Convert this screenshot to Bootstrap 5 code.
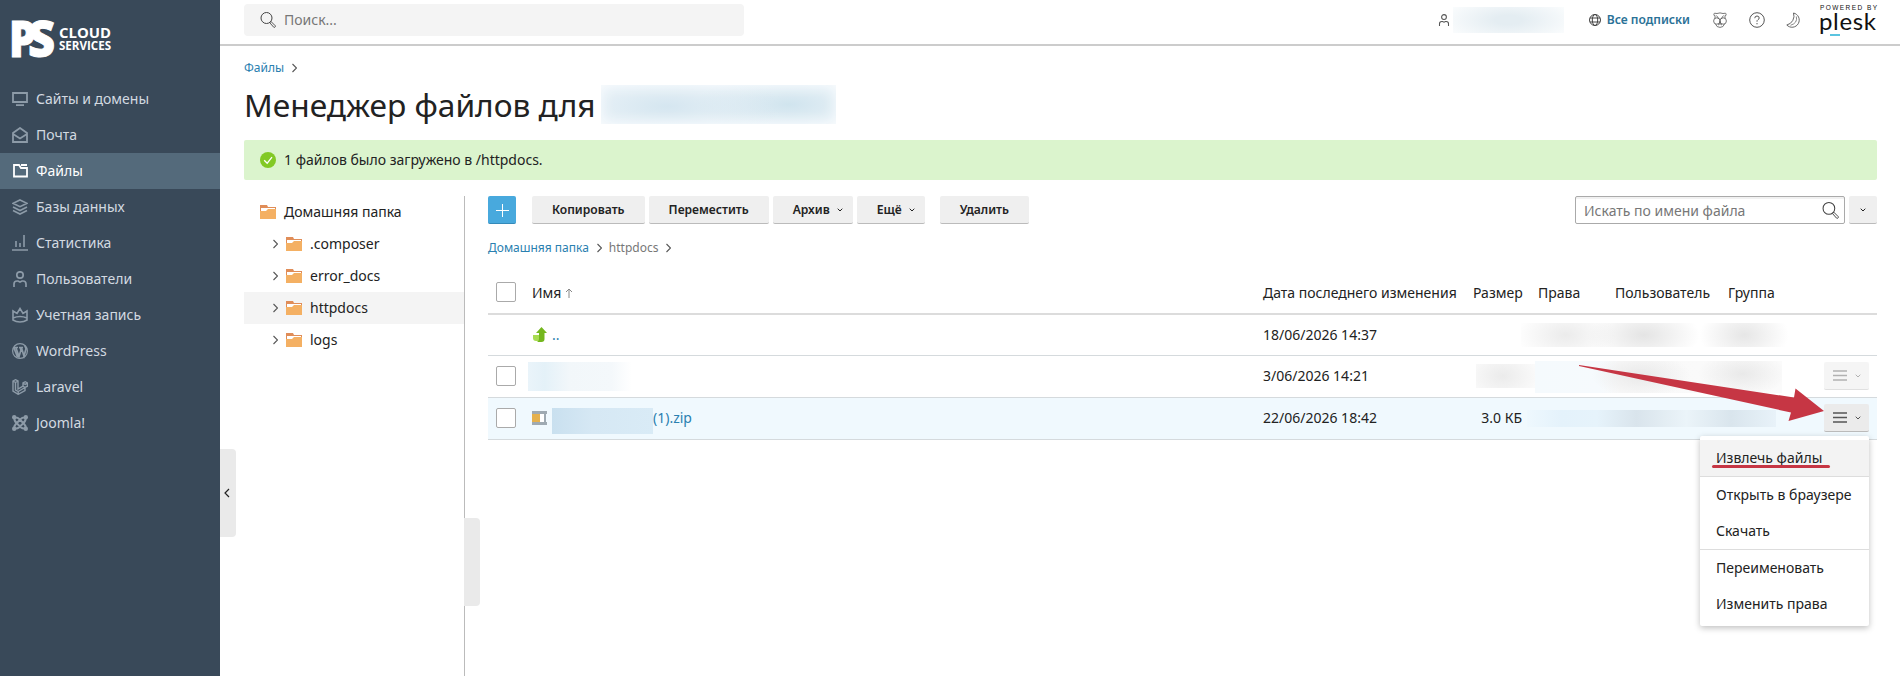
<!DOCTYPE html>
<html lang="ru">

<head>
    <meta charset="UTF-8">
    <meta name="viewport" content="width=device-width, initial-scale=1.0">
    <title>Менеджер файлов</title>
    <!-- Bootstrap CSS -->
    <link href="https://cdn.jsdelivr.net/npm/bootstrap@5.3.2/dist/css/bootstrap.min.css" rel="stylesheet">
    <style>
        body {
            font-family: "Noto Sans", "Open Sans", sans-serif;
            font-size: 14px;
            line-height: 20px;
            color: #222;
            height: 676px;
            overflow: hidden;
        }

        a {
            color: #2a80b0;
            text-decoration: none;
        }

        svg {
            display: block;
            flex: none;
        }

        .line-icon {
            fill: none;
            stroke: currentColor;
        }

        /* Sidebar */
        .sidebar {
            width: 220px;
            background: #394959;
        }

        .brand {
            height: 81px;
        }

        .side-menu .nav-link {
            height: 36px;
            padding: 0 12px 1px;
            gap: 8px;
            font-size: 14px;
            color: #d3dae1;
        }

        .side-menu .nav-link svg {
            color: #8d9ba8;
        }

        .side-menu .nav-link.active {
            background: #546a7b;
            color: #fff;
        }

        .side-menu .nav-link.active svg {
            color: #fff;
        }

        .handle {
            left: 100%;
            width: 16px;
            height: 88px;
            background: #eaeaea;
            border-radius: 0 4px 4px 0;
        }

        .handle-side {
            top: 449px;
        }

        .handle-tree {
            top: 322px;
        }

        /* Top bar */
        .topbar {
            height: 46px;
            padding: 4px 22px 0 24px;
            border-bottom: 2px solid #ccc;
        }

        .global-search {
            width: 500px;
            height: 32px;
            padding: 0 16px;
            gap: 8px;
            background: #f4f4f4;
            border-radius: 4px;
            color: #777;
        }

        .topbar-right {
            height: 32px;
            color: #555;
        }

        .subscriptions {
            gap: 6px;
            margin-left: 25px;
            margin-right: 23px;
            font-weight: 600;
            font-size: 12.1px;
            color: #2b7297;
        }

        .panda {
            margin-right: 22px;
        }

        .moon {
            margin-left: 21px;
        }

        .page-body {
            padding: 13px 23px 0 24px;
        }

        .crumbs {
            font-size: 12px;
            line-height: 18px;
            gap: 7px;
            color: #777;
        }

        .crumbs-path {
            margin: 15px 0 13px;
        }

        .title-line {
            gap: 5px;
            margin: 7px 0 16px;
        }

        h1 {
            font-size: 31.7px;
            line-height: 39px;
            font-weight: 400;
            color: #222;
        }

        .notice {
            height: 40px;
            padding: 0 16px;
            gap: 8px;
            background: #dbf4cd;
            border-radius: 2px;
        }

        /* Folder tree */
        .tree {
            width: 221px;
            border-right: 1px solid #bbb;
        }

        .tree-row {
            height: 32px;
            gap: 8px;
            padding-left: 28px;
        }

        .tree-row.root {
            padding-left: 16px;
        }

        .tree-row.current {
            background: #f4f4f4;
        }

        /* Toolbar */
        .file-pane {
            padding-left: 23px;
        }

        .tool {
            height: 28px;
            padding: 0 20px;
            border: 0;
            border-bottom: 1px solid #bbb;
            border-radius: 2px;
            background: #efefef;
            font-size: 12.1px;
            font-weight: 600;
            line-height: 26px;
            color: #222;
        }

        .tool-menu {
            display: flex;
            align-items: center;
            gap: 7px;
            padding-right: 10px;
        }

        .tool-last {
            margin-left: 11px;
        }

        .tool-add {
            width: 28px;
            padding: 0 6px;
            background: #48a9dd;
            border-bottom-color: #348ab9;
        }

        .tool-drop {
            width: 28px;
            padding: 0 11px;
        }

        .file-search {
            width: 270px;
            height: 28px;
            padding: 1px 5px 0 8px;
            border: 1px solid #aaa;
            border-radius: 2px;
            box-shadow: inset 0 2px 0 #f1f1f1;
            color: #777;
        }

        /* File list */
        .files {
            table-layout: fixed;
            width: 1389px;
            color: #222;
        }

        .files th {
            font-weight: 400;
        }

        .files th,
        .files td {
            padding: 0;
            vertical-align: middle;
            border-bottom: 1px solid #d5dadd;
        }

        .files thead th {
            height: 44px;
            padding-top: 2px;
            border-bottom: 2px solid #dcdcdc;
        }

        .files tbody td {
            height: 42px;
        }

        .files tbody tr:first-child td {
            height: 41px;
        }

        .files .chosen td {
            background: #f0f9fe;
        }

        .files .form-check-input {
            display: block;
            width: 20px;
            height: 20px;
            margin: 0 0 0 8px;
            border: 1px solid #aaa;
            border-radius: 2px;
        }

        .files thead .form-check-input {
            margin-bottom: 2px;
        }

        .row-btn {
            display: flex;
            align-items: center;
            width: 45px;
            height: 28px;
            padding: 0 9px;
            gap: 8px;
            border-bottom: 1px solid #bbb;
            border-radius: 2px;
            background: #ebebeb;
            color: #555;
        }

        .row-btn.faded {
            opacity: .45;
        }

        /* Hidden values */
        .veil {
            display: block;
        }

        .veil-user {
            width: 111px;
            height: 26px;
            margin-left: 3px;
            background: radial-gradient(ellipse 60% 90% at center, #e4edf2 20%, #fafcfd);
        }

        .veil-title {
            width: 235px;
            height: 39px;
            margin-top: 1px;
            background: radial-gradient(ellipse 50% 90% at 28% 55%, #d5e6f0, transparent),
                radial-gradient(ellipse 40% 80% at 80% 50%, #d0e4ee, transparent), #f0f6fa;
            box-shadow: inset 0 0 14px #fafcfe;
        }

        .veil-file {
            width: 104px;
            height: 29px;
            margin-left: -4px;
            background: linear-gradient(90deg, #eaf4fa, #e4f1f8 16%, #f2f7fa 40%, #f4f8fb 80%, #fff);
        }

        .veil-zip {
            width: 101px;
            height: 26px;
            margin-top: 5px;
            background: linear-gradient(90deg, #c9e0ef, #d6e8f4 40%, #d9ebf6);
        }

        .veil-meta {
            width: 279px;
            height: 24px;
            margin-left: -17px;
            background: radial-gradient(ellipse 18% 120% at 16% 50%, #ebebeb, transparent),
                radial-gradient(ellipse 20% 120% at 44% 50%, #e4e4e4, transparent),
                radial-gradient(ellipse 16% 120% at 80% 50%, #e6e6e6, transparent);
        }

        .veil-size {
            width: 59px;
            height: 24px;
            margin-left: 3px;
            background: radial-gradient(ellipse 60% 100% at 45% 50%, #ebebeb, #fafafa);
        }

        .veil-meta2 {
            width: 247px;
            height: 32px;
            margin: 2px 0 0 -3px;
            background: radial-gradient(ellipse 20% 70% at 43% 45%, #e9e9e9, transparent),
                radial-gradient(ellipse 18% 70% at 84% 40%, #e9e9e9, transparent),
                linear-gradient(90deg, #f5fafd, #f6fafd 26%, #f9f9f9 34%, #fbfbfb);
        }

        .veil-meta3 {
            width: 249px;
            height: 17px;
            margin-left: -11px;
            background: linear-gradient(90deg, #eef8fe, #e4f2fb 14%, #e6f3fb 28%, #d9e4ec 44%, #ebf4f9 64%, #d9e5ed 82%, #e8f2f9);
        }

        /* Context menu */
        .ctx {
            display: block;
            top: 436px;
            right: 31px;
            left: auto;
            width: 169px;
            min-width: 0;
            padding: 4px 0;
            border: 0;
            border-radius: 2px;
            box-shadow: 0 2px 6px rgba(0, 0, 0, .25);
            font-size: 14px;
        }

        .ctx .dropdown-item {
            height: 36px;
            padding: 8px 16px;
            line-height: 20px;
            color: #222;
        }

        .ctx .dropdown-item.hovered {
            background: #f3f3f3;
        }

        .ctx .dropdown-divider {
            margin: 0;
            border-color: #ddd;
        }

        .marker {
            left: 12px;
            bottom: 8px;
            width: 118px;
            height: 3px;
            border-radius: 2px;
            background: #c63644;
        }

        .pointer {
            top: 360px;
            right: 74px;
            z-index: 1001;
        }
    </style>
</head>

<body class="d-flex position-relative">
    <!-- Shared shapes -->
    <svg width="0" height="0" class="position-absolute">
        <symbol id="folder" viewBox="0 0 16 16">
            <path d="M0 1h7l1 2h8v5H0z" fill="#e08d58" />
            <path d="M1 4h14v5H1z" fill="#fff" />
            <path d="M0 7h6l2-2h8v10H0z" fill="#f4b063" />
        </symbol>
        <symbol id="right" viewBox="0 0 6 10">
            <path d="M1.500 1l4 4-4 4" fill="none" stroke="#555" stroke-width="1.1" />
        </symbol>
        <symbol id="down" viewBox="0 0 6 4">
            <path d="M.7.7L3 3 5.300.7" fill="none" stroke="currentColor" />
        </symbol>
        <symbol id="lens" viewBox="0 0 16 16">
            <g fill="none" stroke="currentColor">
                <circle cx="6.500" cy="6" r="5.500" />
                <path d="M10 10.500l1-1 4.300 4.300q.3 1-.4 1.400t-1.200 0L10 11z" stroke-width=".9" />
            </g>
        </symbol>
        <symbol id="bars" viewBox="0 0 14 11">
            <path d="M0 1h14M0 5.500h14M0 10h14" stroke="currentColor" stroke-width="1.700" />
        </symbol>
        <symbol id="person" viewBox="0 0 16 16">
            <g fill="none" stroke="currentColor">
                <circle cx="8" cy="4" r="3.200" />
                <path d="M2 16v-3q0-3 3-3h1l2 1 2-1h1q3 0 3 3v3" />
            </g>
        </symbol>
    </svg>

    <!-- Sidebar -->
    <aside class="sidebar position-relative flex-shrink-0">
        <div class="brand">
            <svg width="120" height="81" fill="#fff" font-family="Open Sans, sans-serif">
                <text x="9" y="57" font-size="50" font-weight="800" textLength="27" lengthAdjust="spacingAndGlyphs" stroke="#fff">P</text>
                <text x="28" y="56.500" font-size="49" font-weight="800" textLength="27" lengthAdjust="spacingAndGlyphs" stroke="#fff">S</text>
                <text x="59" y="38" font-size="14.500" font-weight="700" textLength="52" lengthAdjust="spacingAndGlyphs">CLOUD</text>
                <text x="59" y="49.500" font-size="11.500" font-weight="700" textLength="52" lengthAdjust="spacingAndGlyphs">SERVICES</text>
            </svg>
        </div>
        <nav class="side-menu nav flex-column flex-nowrap">
            <a class="nav-link d-flex align-items-center" href="#">
                <svg class="line-icon" width="16" height="16" stroke-width="1.8"><path d="M1 2h14v9H1zM4 14.100h8" /></svg>
                Сайты и домены
            </a>
            <a class="nav-link d-flex align-items-center" href="#">
                <svg class="line-icon" width="16" height="16" stroke-width="1.8"><path d="M1 15V6l7-5 7 5v9zM1 7l7 4.500L15 7" /></svg>
                Почта
            </a>
            <a class="nav-link active d-flex align-items-center" href="#">
                <svg class="line-icon" width="16" height="16" stroke-width="1.8"><path d="M2 2h5l2 3h6v8.500H2zM9 2h6" /></svg>
                Файлы
            </a>
            <a class="nav-link d-flex align-items-center" href="#">
                <svg class="line-icon" width="16" height="16" stroke-width="1.6"><path d="M8 1l7 3.300-7 3.300-7-3.300zM1 8l7 3.500L15 8M1 11.500L8 15l7-3.500" /></svg>
                Базы данных
            </a>
            <a class="nav-link d-flex align-items-center" href="#">
                <svg class="line-icon" width="16" height="16" stroke-width="1.6"><path d="M0 15h16M4 6v6M8 8v4M12 0v12" /></svg>
                Статистика
            </a>
            <a class="nav-link d-flex align-items-center" href="#">
                <svg width="16" height="16" stroke-width="1.7"><use href="#person" /></svg>
                Пользователи
            </a>
            <a class="nav-link d-flex align-items-center" href="#">
                <svg class="line-icon" width="16" height="16" stroke-width="1.6"><path d="M1 13V4l4 2.500 3-5 3 5L15 4v9q-3 2-7 2t-7-2zM1 11q7-3 14 0" /></svg>
                Учетная запись
            </a>
            <a class="nav-link d-flex align-items-center" href="#">
                <svg class="line-icon" width="16" height="16"><circle cx="8" cy="8" r="7.400" stroke-width="1.200" /><path d="M2 5l3.500 9M2 4.500h4M4 5l3 8.500L9 7 8 4.500M7 4.500h4M9.500 5l2.500 8L14 6q0-2-1.500-3" stroke-width="1.700" /></svg>
                WordPress
            </a>
            <a class="nav-link d-flex align-items-center" href="#">
                <svg class="line-icon" width="16" height="16" stroke-width="1.400"><path d="M1 2l2.500-1.300L6 2v8l5-3V4l2.300-1.300L15.500 4v3.200L13 8.500v3L6.200 15.300 1 12zM1 2l2.500 1.500L6 2M3.500 3.500V11L6.200 12.500 13 8.500M11 4l2.200 1.400L15.500 4M11 7l2 1.500M6.200 12.500v2.800" /></svg>
                Laravel
            </a>
            <a class="nav-link d-flex align-items-center" href="#">
                <svg class="line-icon" width="16" height="16" stroke-width="2"><path d="M2.500 3q-.5 3 2 5l4.500 4.500q2 1.500 4.500.8M13.500 3q.5 3-2 5L7 12.500q-2 1.500-4.500.8M2.500 2.700q3-.5 5 1.500L12 8.700q2 2 1.500 4.500M13.500 2.700q-3-.5-5 1.500L4 8.700q-2 2-1.500 4.500" /><g fill="currentColor" stroke="none"><circle cx="2.200" cy="2.200" r="2.200" /><circle cx="13.800" cy="2.200" r="2.200" /><circle cx="2.200" cy="13.800" r="2.200" /><circle cx="13.800" cy="13.800" r="2.200" /></g></svg>
                Joomla!
            </a>
        </nav>
        <div class="handle handle-side position-absolute d-flex align-items-center ps-1">
            <svg class="line-icon" width="6" height="10" stroke-width="1.2"><path d="M5 1L1 5l4 4" /></svg>
        </div>
    </aside>

    <div class="flex-grow-1 d-flex flex-column">
        <!-- Top bar -->
        <header class="topbar d-flex justify-content-between align-items-start">
            <div class="global-search d-flex align-items-center">
                <svg width="16" height="16" color="#444"><use href="#lens" /></svg>
                Поиск...
            </div>
            <div class="topbar-right d-flex align-items-center">
                <svg width="12" height="12"><use href="#person" stroke-width="1.4" /></svg>
                <span class="veil veil-user"></span>
                <a class="subscriptions d-flex align-items-center" href="#">
                    <svg class="line-icon" width="12" height="12" color="#444"><circle cx="6" cy="6" r="5.500" /><ellipse cx="6" cy="6" rx="2.700" ry="5.500" /><path d="M1 4h10M1 8h10" /></svg>
                    Все подписки
                </a>
                <svg class="line-icon panda" width="14" height="16" stroke-width=".8">
                    <path d="M1.500 4Q0 1.500 1.500 1.200L4 1.500q3-1.200 6 0l2.500-.3Q14 1.500 12.500 4M2 3.500v3M12 3.500v3M3.500 3.500L6 7M10.500 3.500L8 7" />
                    <circle cx="3.800" cy="9" r="3.200" />
                    <circle cx="10.200" cy="9" r="3.200" />
                    <path d="M2.500 12q1 3.400 4.500 3.400t4.500-3.400M5 13q2-2.500 4 0M7 9v3" />
                </svg>
                <svg class="line-icon" width="16" height="16"><circle cx="8" cy="8" r="7.300" /><path d="M5.800 6.200q0-2.200 2.200-2.200t2.200 2q0 1-1.200 1.700T8 9.700M8 11v1.300" /></svg>
                <svg class="line-icon moon" width="14" height="16" stroke-width=".9">
                    <path d="M7.500 1A7.200 7.200 0 1 1 .8 13 9.300 9.300 0 0 0 7.500 1z" />
                    <path d="M10.300 4.500Q12 11 4.500 13.300" stroke-width=".7" />
                </svg>
                <svg class="ms-3" width="62" height="36" fill="#111" font-family="Lato, sans-serif">
                    <text x="4" y="8" font-size="6.500" font-family="Liberation Sans" textLength="57">POWERED BY</text>
                    <text x="3" y="28" font-size="24" textLength="57">plesk</text>
                    <path d="M14 32h10v2H14z" fill="#5bc4e0" />
                </svg>
            </div>
        </header>

        <main class="page-body flex-grow-1 d-flex flex-column">
            <div class="crumbs d-flex align-items-center">
                <a href="#">Файлы</a>
                <svg width="6" height="10"><use href="#right" /></svg>
            </div>
            <div class="title-line d-flex align-items-center">
                <h1 class="m-0">Менеджер файлов для</h1>
                <span class="veil veil-title"></span>
            </div>
            <div class="notice d-flex align-items-center">
                <svg width="16" height="16"><circle cx="8" cy="8" r="8" fill="#82c925" /><path d="M4.200 8.200l3 3 4.800-6" fill="none" stroke="#fff" stroke-width="1.300" /></svg>
                1 файлов было загружено в /httpdocs.
            </div>

            <div class="d-flex flex-grow-1 mt-3">
                <!-- Folder tree -->
                <div class="tree position-relative flex-shrink-0">
                    <div class="tree-row root d-flex align-items-center">
                        <svg width="16" height="16"><use href="#folder" /></svg>
                        Домашняя папка
                    </div>
                    <div id="tree-rows"></div>
                    <div class="handle handle-tree position-absolute"></div>
                </div>

                <div class="file-pane flex-grow-1">
                    <!-- Toolbar -->
                    <div class="d-flex justify-content-between">
                        <div class="d-flex gap-1">
                            <button class="tool tool-add me-2">
                                <svg class="line-icon" width="16" height="16" color="#fff"><path d="M8.500 2v13M2 8.500h13" /></svg>
                            </button>
                            <button class="tool ms-1">Копировать</button>
                            <button class="tool">Переместить</button>
                            <button class="tool tool-menu">Архив <svg width="6" height="4"><use href="#down" /></svg></button>
                            <button class="tool tool-menu">Ещё <svg width="6" height="4"><use href="#down" /></svg></button>
                            <button class="tool tool-last">Удалить</button>
                        </div>
                        <div class="d-flex gap-1">
                            <div class="file-search d-flex align-items-center justify-content-between">
                                Искать по имени файла
                                <svg width="17" height="17" color="#444"><use href="#lens" /></svg>
                            </div>
                            <button class="tool tool-drop"><svg width="6" height="4"><use href="#down" /></svg></button>
                        </div>
                    </div>

                    <div class="crumbs crumbs-path d-flex align-items-center">
                        <a href="#">Домашняя папка</a>
                        <svg width="6" height="10"><use href="#right" /></svg>
                        <span>httpdocs</span>
                        <svg width="6" height="10"><use href="#right" /></svg>
                    </div>

                    <!-- File list -->
                    <table class="files">
                        <colgroup>
                            <col width="44">
                            <col width="731">
                            <col width="210">
                            <col width="65">
                            <col width="77">
                            <col width="113">
                            <col width="96">
                            <col width="53">
                        </colgroup>
                        <thead>
                            <tr>
                                <th><input class="form-check-input" type="checkbox"></th>
                                <th>
                                    <span class="d-flex align-items-center gap-1">Имя
                                        <svg class="line-icon" width="8" height="10" color="#888"><path d="M4 10V1M1 4l3-3 3 3" /></svg>
                                    </span>
                                </th>
                                <th>Дата последнего изменения</th>
                                <th>Размер</th>
                                <th>Права</th>
                                <th>Пользователь</th>
                                <th>Группа</th>
                                <th></th>
                            </tr>
                        </thead>
                        <tbody>
                            <tr>
                                <td></td>
                                <td>
                                    <a class="d-flex align-items-center gap-1" href="#">
                                        <svg width="16" height="16"><path d="M1 8h6v6H4q-3 0-3-3z" fill="#a8dc52" /><path d="M9.500 0L15 6h-2.500v6q0 3-3 3H5q2-1 2-3V6H4z" fill="#74b71e" /></svg>
                                        ..
                                    </a>
                                </td>
                                <td>18/06/2026 14:37</td>
                                <td></td>
                                <td colspan="3"><span class="veil veil-meta"></span></td>
                                <td></td>
                            </tr>
                            <tr>
                                <td><input class="form-check-input" type="checkbox"></td>
                                <td><span class="veil veil-file"></span></td>
                                <td>3/06/2026 14:21</td>
                                <td><span class="veil veil-size"></span></td>
                                <td colspan="3"><span class="veil veil-meta2"></span></td>
                                <td>
                                    <div class="row-btn faded">
                                        <svg width="14" height="11"><use href="#bars" /></svg>
                                        <svg width="6" height="4"><use href="#down" /></svg>
                                    </div>
                                </td>
                            </tr>
                            <tr class="chosen">
                                <td><input class="form-check-input" type="checkbox"></td>
                                <td>
                                    <a class="d-flex align-items-center" href="#">
                                        <svg class="me-1" width="16" height="16"><path d="M0 1h15v3h-1v8h1v3H0z" fill="#9faab2" /><path d="M8 4h4v8H8z" fill="#fff" /><path d="M0 4h8v8H0z" fill="#e5b14e" /></svg>
                                        <span class="veil veil-zip"></span>(1).zip
                                    </a>
                                </td>
                                <td>22/06/2026 18:42</td>
                                <td><div class="text-end pe-3">3.0 КБ</div></td>
                                <td colspan="3"><span class="veil veil-meta3"></span></td>
                                <td>
                                    <div class="row-btn">
                                        <svg width="14" height="11"><use href="#bars" /></svg>
                                        <svg width="6" height="4"><use href="#down" /></svg>
                                    </div>
                                </td>
                            </tr>
                        </tbody>
                    </table>
                </div>
            </div>
        </main>
    </div>

    <!-- Row menu -->
    <ul class="ctx dropdown-menu position-absolute">
        <li class="position-relative">
            <a class="dropdown-item hovered" href="#">Извлечь файлы</a>
            <span class="marker position-absolute"></span>
        </li>
        <li><hr class="dropdown-divider"></li>
        <li><a class="dropdown-item" href="#">Открыть в браузере</a></li>
        <li><a class="dropdown-item" href="#">Скачать</a></li>
        <li><hr class="dropdown-divider"></li>
        <li><a class="dropdown-item" href="#">Переименовать</a></li>
        <li><a class="dropdown-item" href="#">Изменить права</a></li>
    </ul>

    <svg class="pointer position-absolute" width="250" height="65">
        <path d="M3 5l215 32.500 1.500-9L248 51l-35.500 10 2.500-8.500L3 6z" fill="#c63644" />
    </svg>

    <!-- Bootstrap JS -->
    <script src="https://cdn.jsdelivr.net/npm/bootstrap@5.3.2/dist/js/bootstrap.bundle.min.js"></script>
    <script>
        const treeRows = document.getElementById('tree-rows');
        const folders = ['.composer', 'error_docs', 'httpdocs', 'logs'];

        folders.forEach(name => {
            treeRows.innerHTML += `
                <div class="tree-row d-flex align-items-center ${name === 'httpdocs' ? 'current' : ''}">
                    <svg width="6" height="10"><use href="#right" /></svg>
                    <svg width="16" height="16"><use href="#folder" /></svg>
                    ${name}
                </div>
            `;
        });
    </script>
</body>

</html>
